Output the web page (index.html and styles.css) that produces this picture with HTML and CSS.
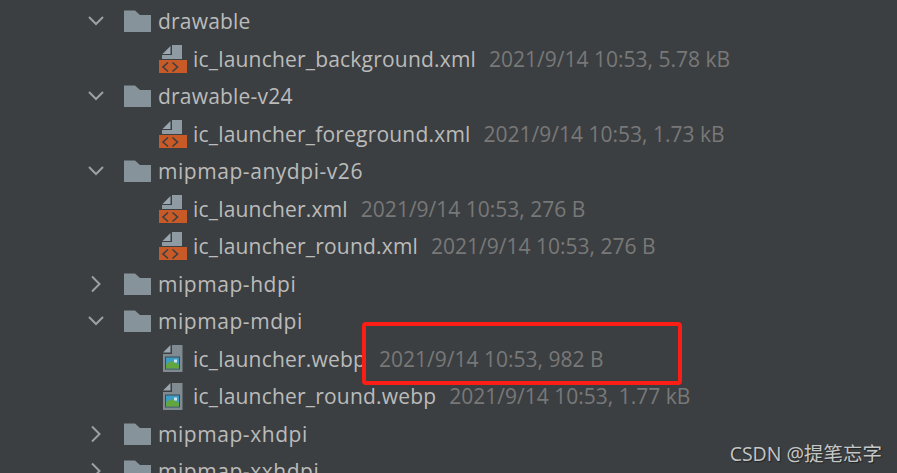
FILE: index.html
```html
<!DOCTYPE html>
<html lang="en">
<head>
    <meta charset="UTF-8">
    <meta name="viewport" content="width=device-width, initial-scale=1.0">
    <title>Project tree</title>
    <link rel="stylesheet" href="styles.css">
</head>
<body>
    <svg class="defs" width="0" height="0">
        <symbol id="open" viewBox="0 0 18 18"><path d="M2 5l7 7 7-7" fill="none" stroke="#9da0a2" stroke-width="2"/></symbol>
        <symbol id="closed" viewBox="0 0 18 18"><path d="M5 1.500l7.500 7.500-7.500 7.500" fill="none" stroke="#9da0a2" stroke-width="2"/></symbol>
        <symbol id="folder" viewBox="0 0 27 22"><path d="M0 .5h11l5 4.500h11v17H0z" fill="#87939a"/></symbol>
        <symbol id="xml" viewBox="0 0 28 28">
            <path d="M3.500 9L11.500 1v8z" fill="#9aa7b0"/>
            <path d="M13 0h10v14H3v-4h10z" fill="#8f9ba3"/>
            <path d="M0 15h28v13H0z" fill="#c75a27"/>
            <path d="M9 17.500l-5 4.500 5 4.500M13.500 17.500l5 4.500-5 4.500" fill="none" stroke="#3c3f41" stroke-width="1.600"/>
        </symbol>
        <symbol id="image" viewBox="0 0 20 27">
            <path d="M9 0h10.500v27H0V9h9z" fill="#7f8b91"/>
            <path d="M0 7.500L7.500 0v7.500z" fill="#9aa7b0"/>
            <path d="M2 11.500h15v13H2z" fill="#3d4b52"/>
            <path d="M3 12.500h13v11H3z" fill="#3d9cc4"/>
            <path d="M3 20c4-5 7-4 13 0v3.500H3z" fill="#62a63f"/>
            <path d="M11 14.500h3v3h-3z" fill="#cfe3ee"/>
        </symbol>
    </svg>

    <ul class="tree">
        <li class="row"><svg class="arrow"><use href="#open"/></svg><svg class="folder"><use href="#folder"/></svg><span class="name">drawable</span></li>
        <li class="row file"><svg class="xml"><use href="#xml"/></svg><span class="name">ic_launcher_background.xml</span><span class="meta">2021/9/14 10:53, 5.78 kB</span></li>
        <li class="row"><svg class="arrow"><use href="#open"/></svg><svg class="folder"><use href="#folder"/></svg><span class="name">drawable-v24</span></li>
        <li class="row file"><svg class="xml"><use href="#xml"/></svg><span class="name">ic_launcher_foreground.xml</span><span class="meta">2021/9/14 10:53, 1.73 kB</span></li>
        <li class="row"><svg class="arrow"><use href="#open"/></svg><svg class="folder"><use href="#folder"/></svg><span class="name mipmap">mipmap-anydpi-v26</span></li>
        <li class="row file"><svg class="xml"><use href="#xml"/></svg><span class="name">ic_launcher.xml</span><span class="meta">2021/9/14 10:53, 276 B</span></li>
        <li class="row file"><svg class="xml"><use href="#xml"/></svg><span class="name">ic_launcher_round.xml</span><span class="meta">2021/9/14 10:53, 276 B</span></li>
        <li class="row"><svg class="arrow"><use href="#closed"/></svg><svg class="folder"><use href="#folder"/></svg><span class="name mipmap">mipmap-hdpi</span></li>
        <li class="row"><svg class="arrow"><use href="#open"/></svg><svg class="folder"><use href="#folder"/></svg><span class="name mipmap">mipmap-mdpi</span></li>
        <li class="row file"><svg class="image"><use href="#image"/></svg><span class="name">ic_launcher.webp</span><span class="meta">2021/9/14 10:53, 982 B</span></li>
        <li class="row file"><svg class="image"><use href="#image"/></svg><span class="name">ic_launcher_round.webp</span><span class="meta">2021/9/14 10:53, 1.77 kB</span></li>
        <li class="row"><svg class="arrow"><use href="#closed"/></svg><svg class="folder"><use href="#folder"/></svg><span class="name mipmap">mipmap-xhdpi</span></li>
        <li class="row"><svg class="arrow"><use href="#closed"/></svg><svg class="folder"><use href="#folder"/></svg><span class="name mipmap">mipmap-xxhdpi</span></li>
    </ul>

    <div class="highlight"></div>
    <div class="watermark">CSDN @提笔忘字</div>
</body>
</html>
```

FILE: styles.css
```css
html, body {
    height: 100%;
}

body {
    margin: 0;
    overflow: hidden;
    background-color: #3c3f41;
    font-family: 'Open Sans', 'Noto Sans CJK SC', sans-serif;
}

.defs {
    position: absolute;
}

.tree {
    list-style: none;
    margin: 0;
    padding: 2.5px 0 0 87px;
}

.row {
    display: flex;
    align-items: center;
    height: 37.5px;
    font-size: 21px;
    white-space: nowrap;
}

.file {
    padding-left: 72px;
}

.arrow {
    width: 18px;
    height: 18px;
    margin-right: 19px;
}

.folder {
    width: 27px;
    height: 22px;
    margin-right: 7px;
}

.xml {
    width: 28px;
    height: 28px;
    margin-right: 6px;
}

.image {
    width: 20px;
    height: 27px;
    margin: 0 10px 0 4px;
}

.name {
    color: #bbbbbb;
    letter-spacing: 0.2px;
}

.mipmap {
    letter-spacing: 0.55px;
}

.meta {
    margin-left: 13px;
    color: #787878;
}

.highlight {
    position: absolute;
    left: 362px;
    top: 322px;
    width: 312px;
    height: 55px;
    border: 4px solid #fa1e14;
    border-radius: 4px;
}

.watermark {
    position: absolute;
    right: 15px;
    top: 438px;
    font-size: 19.5px;
    color: #c4c6c7;
    text-shadow: 1px 1px 1px #222;
}
```
